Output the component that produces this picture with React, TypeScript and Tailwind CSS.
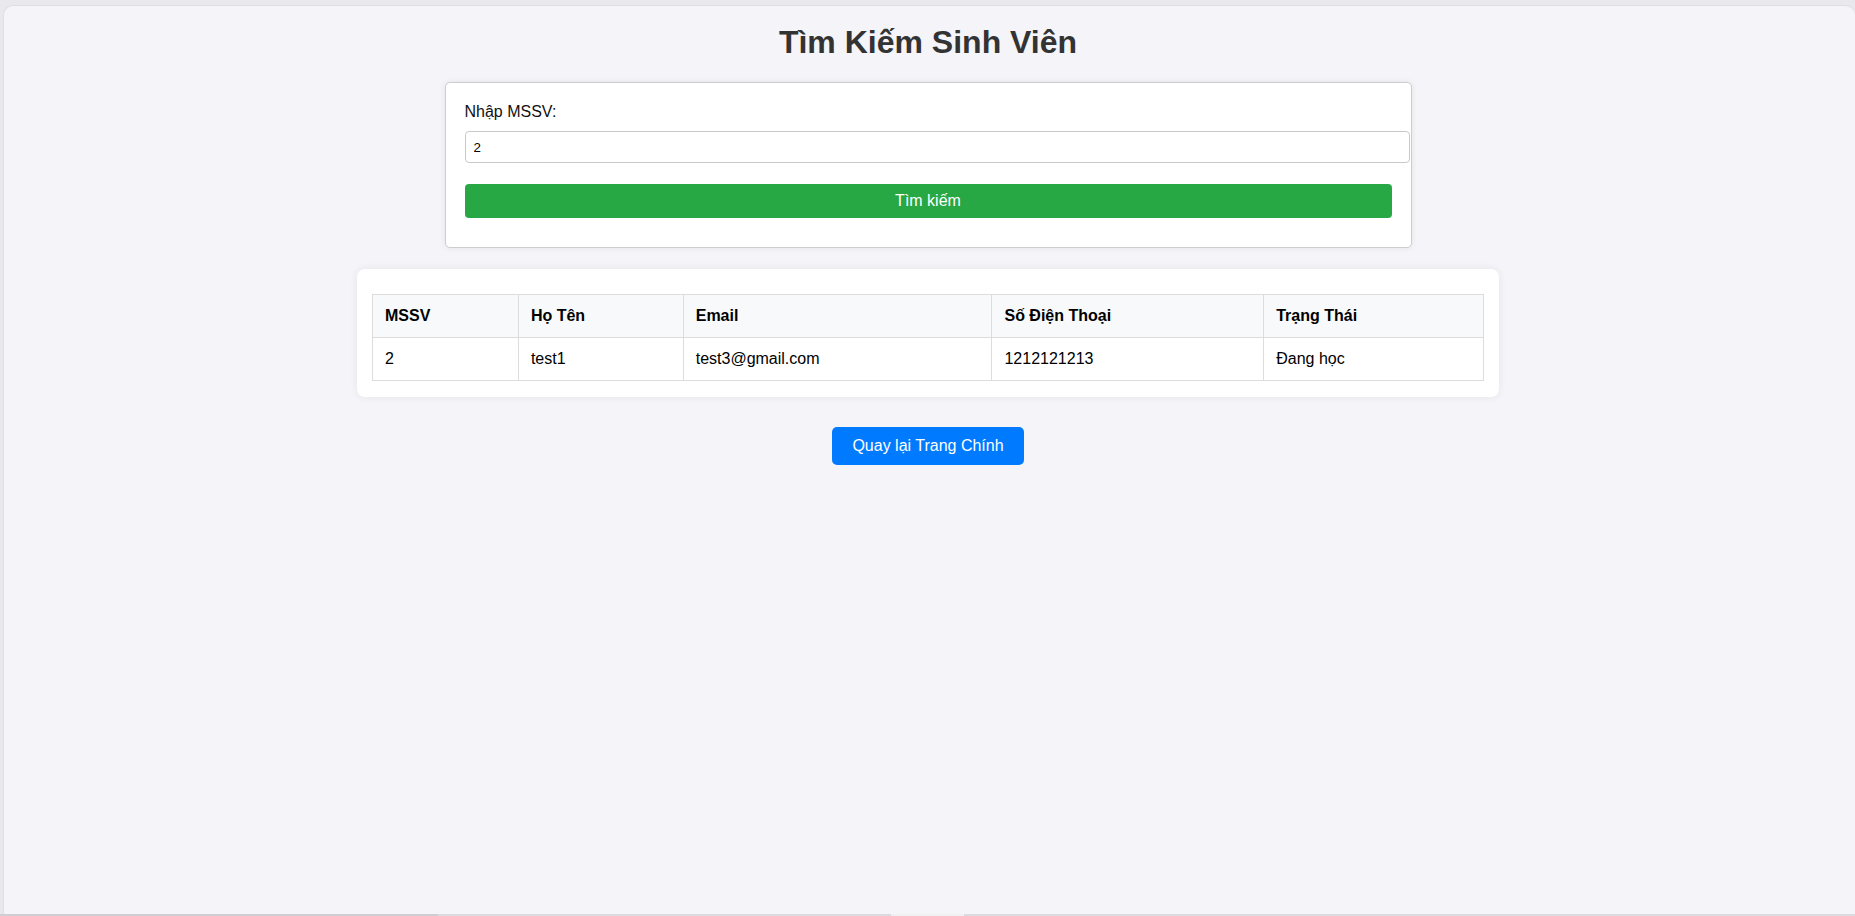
import React from "react";

const cols = [
  { label: "MSSV", w: "w-[146px]" },
  { label: "Họ Tên", w: "w-[165px]" },
  { label: "Email", w: "w-[309px]" },
  { label: "Số Điện Thoại", w: "w-[272px]" },
  { label: "Trạng Thái", w: "w-[220px]" },
];

const row = ["2", "test1", "test3@gmail.com", "1212121213", "Đang học"];

export default function App() {
  return (
    <div
      className="w-[1855px] h-[916px] bg-[#e9e9ed] flex flex-col overflow-hidden"
      style={{ fontFamily: '"Liberation Sans", Arial, sans-serif' }}
    >
      <div className="flex-1 ml-[3px] mt-[5px] bg-[#f4f4f9] rounded-t-[10px] border-t border-l border-[#dedee3] flex flex-col items-center pt-[18px] pr-[3px]">
        <h1 className="text-[32px] leading-[37px] font-bold text-[#333] m-0">
          Tìm Kiếm Sinh Viên
        </h1>

        <div className="mt-[21px] w-[967px] bg-white border border-[#cdcdd0] rounded-[5px] shadow-[0_0_6px_rgba(0,0,0,0.08)] px-[19px] pt-[20px] pb-[29px]">
          <label className="block text-[16px] leading-[18px] text-[#111]">
            Nhập MSSV:
          </label>
          <input
            readOnly
            value="2"
            className="mt-[10px] block w-[945px] h-[32px] px-[8px] border border-[#c9c9c9] rounded-[4px] text-[13.33px] text-black bg-white outline-none"
            style={{ fontFamily: '"Liberation Sans", Arial, sans-serif' }}
          />
          <button className="mt-[21px] block w-[927px] h-[34px] bg-[#28a745] text-white text-[16px] leading-[18px] rounded-[4px]">
            Tìm kiếm
          </button>
        </div>

        <div className="mt-[21px] w-[1142px] bg-white rounded-[8px] shadow-[0_0_8px_rgba(0,0,0,0.07)] px-[15px] pt-[25px] pb-[16px]">
          <table className="w-[1112px] border-collapse text-[16px] leading-[18px] text-black">
            <thead>
              <tr className="bg-[#f8f9fa]">
                {cols.map((c) => (
                  <th
                    key={c.label}
                    className={`${c.w} border border-[#dddddd] px-[12px] py-[12px] text-left font-bold`}
                  >
                    {c.label}
                  </th>
                ))}
              </tr>
            </thead>
            <tbody>
              <tr>
                {row.map((v, i) => (
                  <td
                    key={i}
                    className="border border-[#dddddd] px-[12px] py-[12px] text-left"
                  >
                    {v}
                  </td>
                ))}
              </tr>
            </tbody>
          </table>
        </div>

        <button className="mt-[30px] h-[38px] px-[20px] bg-[#007bff] text-white text-[16px] leading-[18px] rounded-[5px]">
          Quay lại Trang Chính
        </button>
      </div>
      <div className="h-[2px] flex">
        <div className="w-[438px] bg-[#cfcfd3]" />
        <div className="w-[453px] bg-[#dcdce0]" />
        <div className="w-[73px] bg-[#f0f0f2]" />
        <div className="flex-1 bg-[#dcdce0]" />
      </div>
    </div>
  );
}
